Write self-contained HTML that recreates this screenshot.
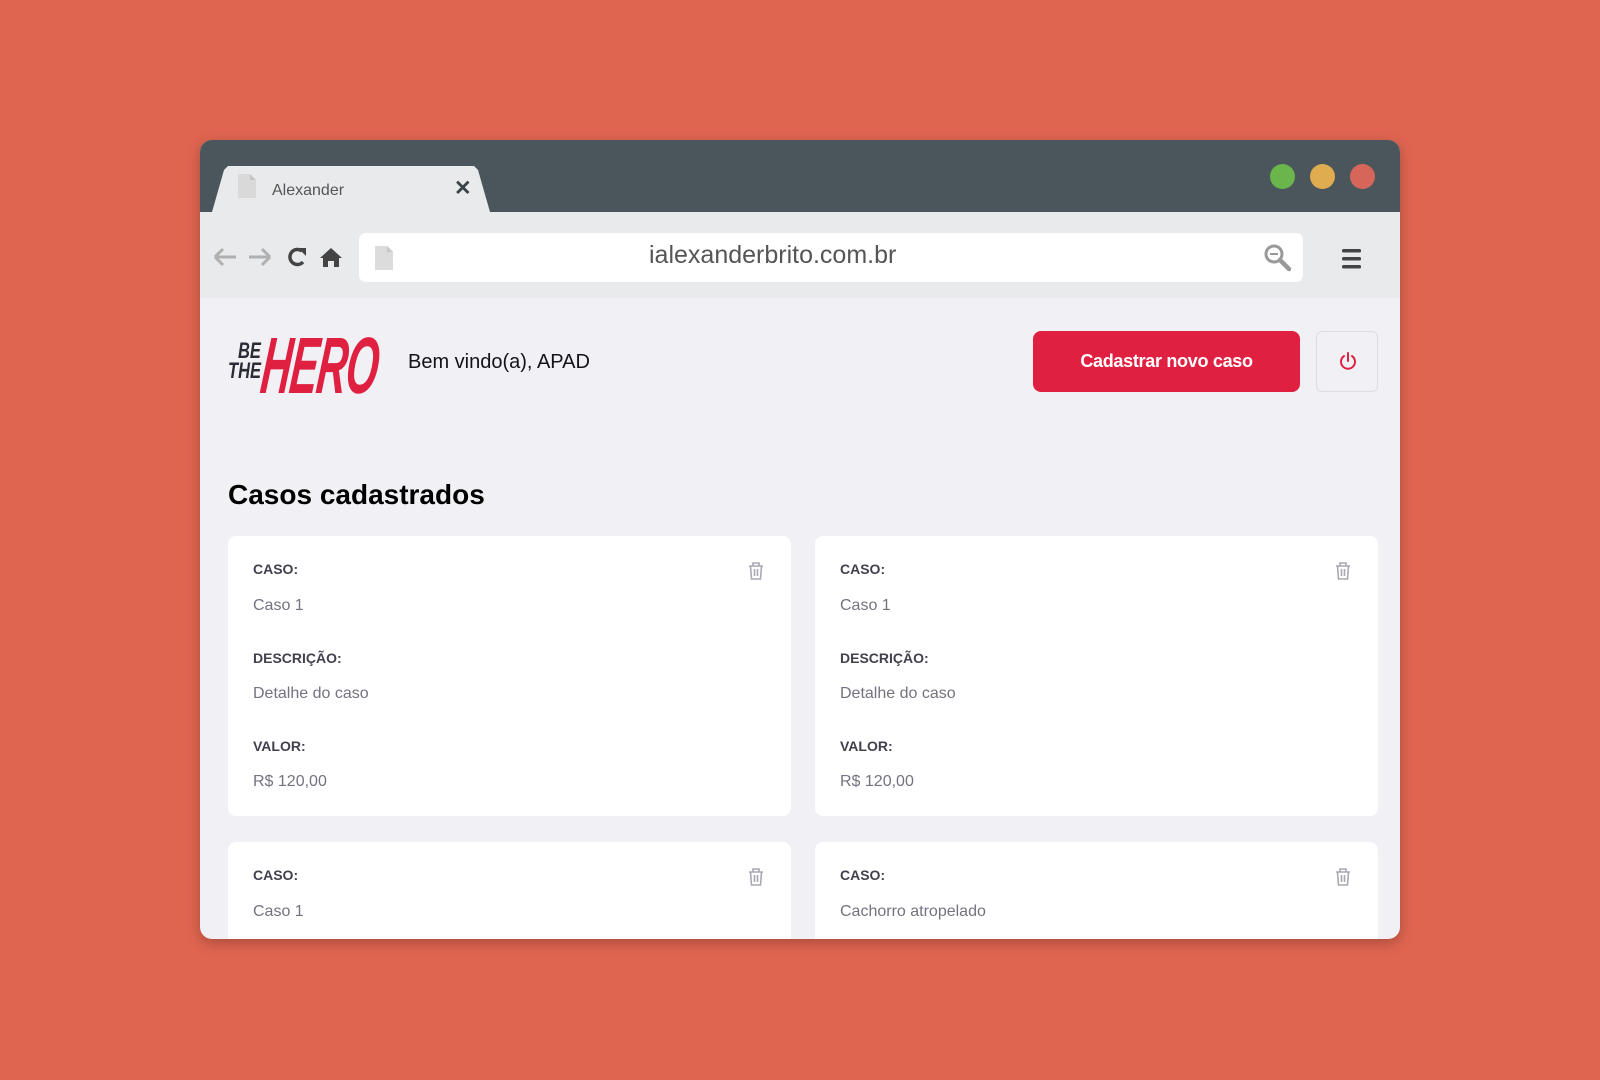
<!DOCTYPE html>
<html><head><meta charset="utf-8"><style>
*{margin:0;padding:0;box-sizing:border-box}
body{width:1600px;height:1080px;background:#e06550;font-family:"Liberation Sans",sans-serif;position:relative;overflow:hidden}
.win{position:absolute;left:200px;top:140px;width:1200px;height:799px;border-radius:12px;overflow:hidden;background:#f0f0f5;box-shadow:0 4px 14px rgba(0,0,0,.25)}
.title{position:absolute;left:0;top:0;width:1200px;height:72px;background:#4a565b}
.tab{position:absolute;left:12px;top:26px;width:278px;height:46px;background:#e9eaec;clip-path:polygon(0 100%,12px 4px,16px 0,262px 0,266px 4px,278px 100%);border-radius:6px 6px 0 0}
.tabt{position:absolute;left:72px;top:42px;font-size:16px;color:#555}
.x{position:absolute;left:254px;top:36px;font-size:21px;font-weight:bold;color:#3a4448}
.dot{position:absolute;top:24px;width:25px;height:25px;border-radius:50%}
.tool{position:absolute;left:0;top:72px;width:1200px;height:86px;background:#e9eaec}
.addr{position:absolute;left:159px;top:21px;width:944px;height:49px;background:#fff;border-radius:7px}
.url{position:absolute;left:290px;top:8px;font-size:25px;color:#555}
.content{position:absolute;left:0;top:158px;width:1200px;height:641px}
.welcome{position:absolute;left:208px;top:211px;font-size:20px;color:#13131a}
.btn{position:absolute;left:833px;top:191px;width:267px;height:61px;background:#e02041;border-radius:8px;color:#fff;font-weight:bold;font-size:18px;text-align:center;line-height:61px;letter-spacing:-.3px}
.pw{position:absolute;left:1116px;top:191px;width:62px;height:61px;border:1px solid #dcdce6;border-radius:6px}
h1{position:absolute;left:28px;top:339px;font-size:28px;font-weight:bold;color:#000}
.card{position:absolute;width:563px;background:#fff;border-radius:8px}
.lab{position:absolute;left:25px;font-size:14px;font-weight:bold;color:#41414d}
.val{position:absolute;left:25px;font-size:16px;color:#737380}
.trash{position:absolute;right:26px;top:25px}
</style></head><body>
<div class="win">
 <div class="title">
  <div class="tab"></div>
  <svg style="position:absolute;left:38px;top:34px" width="18" height="24"><path d="M0 0H12L18 6V24H0Z" fill="#d9d9d9"/><path d="M12 0V6H18" fill="#c4c4c4"/></svg>
  <div class="tabt">Alexander</div>
  <div class="x">✕</div>
  <div class="dot" style="left:1070px;background:#6ab64a"></div>
  <div class="dot" style="left:1110px;background:#e0ac50"></div>
  <div class="dot" style="left:1150px;background:#d6665a"></div>
 </div>
 <div class="tool">
  <svg style="position:absolute;left:12px;top:33px" width="140" height="24">
   <path d="M3 12H24M3 12L11 4M3 12L11 20" stroke="#b0b0b0" stroke-width="3" fill="none"/>
   <path d="M37 12H58M58 12L50 4M58 12L50 20" stroke="#b0b0b0" stroke-width="3" fill="none"/>
   <path d="M90 6A7.5 7.5 0 1 0 91 17" stroke="#444" stroke-width="3.5" fill="none"/><path d="M86 3L94 3L94 11Z" fill="#444"/>
   <path d="M108 13L119 3L130 13H127V22H122V16H116V22H111V13Z" fill="#444"/>
  </svg>
  <div class="addr">
   <svg style="position:absolute;left:16px;top:13px" width="18" height="24"><path d="M0 0H12L18 6V24H0Z" fill="#dcdcdc"/><path d="M12 0V6H18" fill="#c8c8c8"/></svg>
   <div class="url">ialexanderbrito.com.br</div>
   <svg style="position:absolute;left:905px;top:11px" width="28" height="28"><circle cx="10" cy="10" r="8" stroke="#999" stroke-width="3" fill="none"/><path d="M6 10H14" stroke="#999" stroke-width="2"/><path d="M16 16L25 25" stroke="#999" stroke-width="4.5" stroke-linecap="round"/></svg>
  </div>
  <svg style="position:absolute;left:1142px;top:37px" width="20" height="20"><rect y="0" width="19" height="3.5" rx="1.5" fill="#444"/><rect y="8" width="19" height="3.5" rx="1.5" fill="#444"/><rect y="16" width="19" height="3.5" rx="1.5" fill="#444"/></svg>
 </div>
 <div class="content"></div>
 <div style="position:absolute;left:26px;top:192px;width:160px;height:70px">
  <div style="position:absolute;left:12px;top:8px;font-size:22px;font-weight:bold;font-style:italic;color:#2b2b35;transform:scaleX(.75);transform-origin:left;line-height:22px">BE</div>
  <div style="position:absolute;left:2px;top:28px;font-size:22px;font-weight:bold;font-style:italic;color:#2b2b35;transform:scaleX(.75);transform-origin:left;line-height:22px">THE</div>
  <div style="position:absolute;left:36px;top:-6px;font-size:80px;font-weight:bold;font-style:italic;color:#e02041;transform:scaleX(.52) skewX(-12deg);transform-origin:left;line-height:80px;letter-spacing:-2px">HERO</div>
 </div>
 <div class="welcome">Bem vindo(a), APAD</div>
 <div class="btn">Cadastrar novo caso</div>
 <div class="pw"><svg style="position:absolute;left:21px;top:19px" width="20" height="20"><path d="M6 5A7 7 0 1 0 14 5" stroke="#e02041" stroke-width="2" fill="none" stroke-linecap="round"/><path d="M10 2V10" stroke="#e02041" stroke-width="2" stroke-linecap="round"/></svg></div>
 <h1>Casos cadastrados</h1>

 <div class="card" style="left:28px;top:396px;height:280px">
  <div class="lab" style="top:25px">CASO:</div><div class="val" style="top:61px">Caso 1</div>
  <div class="lab" style="top:114px">DESCRIÇÃO:</div><div class="val" style="top:149px">Detalhe do caso</div>
  <div class="lab" style="top:202px">VALOR:</div><div class="val" style="top:237px">R$ 120,00</div>
  <svg class="trash" width="18" height="20"><path d="M2 5H16M6 5V2H12V5M3.5 5L4.5 18H13.5L14.5 5M7.5 8V15M10.5 8V15" stroke="#a8a8b3" stroke-width="1.6" fill="none"/></svg>
 </div>
 <div class="card" style="left:615px;top:396px;height:280px">
  <div class="lab" style="top:25px">CASO:</div><div class="val" style="top:61px">Caso 1</div>
  <div class="lab" style="top:114px">DESCRIÇÃO:</div><div class="val" style="top:149px">Detalhe do caso</div>
  <div class="lab" style="top:202px">VALOR:</div><div class="val" style="top:237px">R$ 120,00</div>
  <svg class="trash" width="18" height="20"><path d="M2 5H16M6 5V2H12V5M3.5 5L4.5 18H13.5L14.5 5M7.5 8V15M10.5 8V15" stroke="#a8a8b3" stroke-width="1.6" fill="none"/></svg>
 </div>
 <div class="card" style="left:28px;top:702px;height:200px">
  <div class="lab" style="top:25px">CASO:</div><div class="val" style="top:61px">Caso 1</div>
  <svg class="trash" width="18" height="20"><path d="M2 5H16M6 5V2H12V5M3.5 5L4.5 18H13.5L14.5 5M7.5 8V15M10.5 8V15" stroke="#a8a8b3" stroke-width="1.6" fill="none"/></svg>
 </div>
 <div class="card" style="left:615px;top:702px;height:200px">
  <div class="lab" style="top:25px">CASO:</div><div class="val" style="top:61px">Cachorro atropelado</div>
  <svg class="trash" width="18" height="20"><path d="M2 5H16M6 5V2H12V5M3.5 5L4.5 18H13.5L14.5 5M7.5 8V15M10.5 8V15" stroke="#a8a8b3" stroke-width="1.6" fill="none"/></svg>
 </div>
</div>
</body></html>
